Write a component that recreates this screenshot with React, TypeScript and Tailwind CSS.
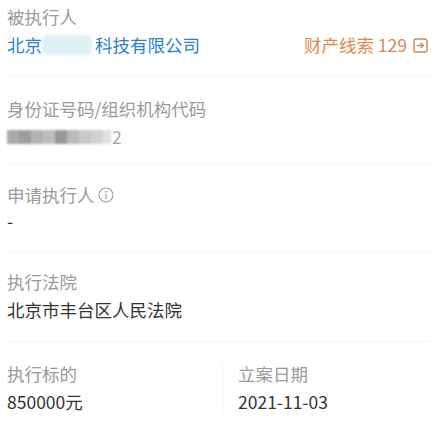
import React from "react";

const font = { fontFamily: '"Noto Sans CJK SC", "Noto Sans", sans-serif' };

function Divider() {
  return <div className="ml-[7px] mr-[15px] h-px bg-[#f4f4f4]" />;
}

export default function App() {
  return (
    <div className="w-[445px] h-[425px] bg-white overflow-hidden" style={font}>
      {/* Section 1 */}
      <div className="pl-[7px] pr-[17px] pt-[3px] pb-[17px]">
        <div className="text-[17.5px] leading-[28px] text-[#9a9a9a]">被执行人</div>
        <div className="flex items-center justify-between">
          <div className="flex items-center text-[17.5px] leading-[28px] text-[#2a7fcf]">
            <span>北京</span>
            <span className="inline-block w-[50px] h-[20px] rounded-[6px] bg-[#dff0f5] blur-[1.5px] mr-[3px]" />
            <span>科技有限公司</span>
          </div>
          <div className="flex items-center text-[17.5px] leading-[28px] text-[#d88a4f]">
            <span>财产线索 129</span>
            <svg width="15" height="15" viewBox="0 0 16 16" className="ml-[6px]">
              <rect x="1" y="1" width="14" height="14" rx="2.5" fill="none" stroke="#c98a5e" strokeWidth="1.5" />
              <path d="M4.5 8h6.5M8.5 5.5L11 8l-2.5 2.5" fill="none" stroke="#c98a5e" strokeWidth="1.5" strokeLinecap="round" strokeLinejoin="round" />
            </svg>
          </div>
        </div>
      </div>
      <Divider />
      {/* Section 2 */}
      <div className="pl-[7px] pt-[18px] pb-[12px]">
        <div className="text-[17.5px] leading-[28px] text-[#9a9a9a]">身份证号码/组织机构代码</div>
        <div className="flex items-center h-[28px]">
          <div className="flex h-[14px] blur-[1px]">
            <span className="w-[12px] bg-[#a9a9a9]" />
            <span className="w-[12px] bg-[#9e9e9e]" />
            <span className="w-[12px] bg-[#b3b3b3]" />
            <span className="w-[12px] bg-[#bdbdbd]" />
            <span className="w-[12px] bg-[#999999]" />
            <span className="w-[12px] bg-[#bababa]" />
            <span className="w-[12px] bg-[#c9c9c9]" />
            <span className="w-[12px] bg-[#d2d2d2]" />
            <span className="w-[8px] bg-[#e2e2e2]" />
          </div>
          <span className="text-[17.5px] text-[#a8a8a8] ml-[1px]">2</span>
        </div>
      </div>
      <Divider />
      {/* Section 3 */}
      <div className="pl-[7px] pt-[17px] pb-[16px]">
        <div className="flex items-center text-[17.5px] leading-[28px] text-[#9a9a9a]">
          <span>申请执行人</span>
          <svg width="16" height="16" viewBox="0 0 16 16" className="ml-[3px]">
            <circle cx="8" cy="8" r="7" fill="none" stroke="#9a9a9a" strokeWidth="1.1" />
            <circle cx="8" cy="4.8" r="0.9" fill="#9a9a9a" />
            <path d="M8 7v5" stroke="#9a9a9a" strokeWidth="1.2" />
          </svg>
        </div>
        <div className="text-[17.5px] leading-[28px] text-[#333] -mt-[2px]">-</div>
      </div>
      <Divider />
      {/* Section 4 */}
      <div className="pl-[7px] pt-[16px] pb-[17px]">
        <div className="text-[17.5px] leading-[28px] text-[#9a9a9a]">执行法院</div>
        <div className="text-[17.5px] leading-[28px] text-[#333]">北京市丰台区人民法院</div>
      </div>
      <Divider />
      {/* Section 5 */}
      <div className="flex pt-[20px]">
        <div className="w-[223px] pl-[7px] border-r border-[#f2f2f2] h-[50px]">
          <div className="text-[17.5px] leading-[28px] text-[#9a9a9a] -mt-[2px]">执行标的</div>
          <div className="text-[17.5px] leading-[28px] text-[#333]">850000元</div>
        </div>
        <div className="pl-[15px]">
          <div className="text-[17.5px] leading-[28px] text-[#9a9a9a] -mt-[2px]">立案日期</div>
          <div className="text-[17.5px] leading-[28px] text-[#333]">2021-11-03</div>
        </div>
      </div>
    </div>
  );
}
